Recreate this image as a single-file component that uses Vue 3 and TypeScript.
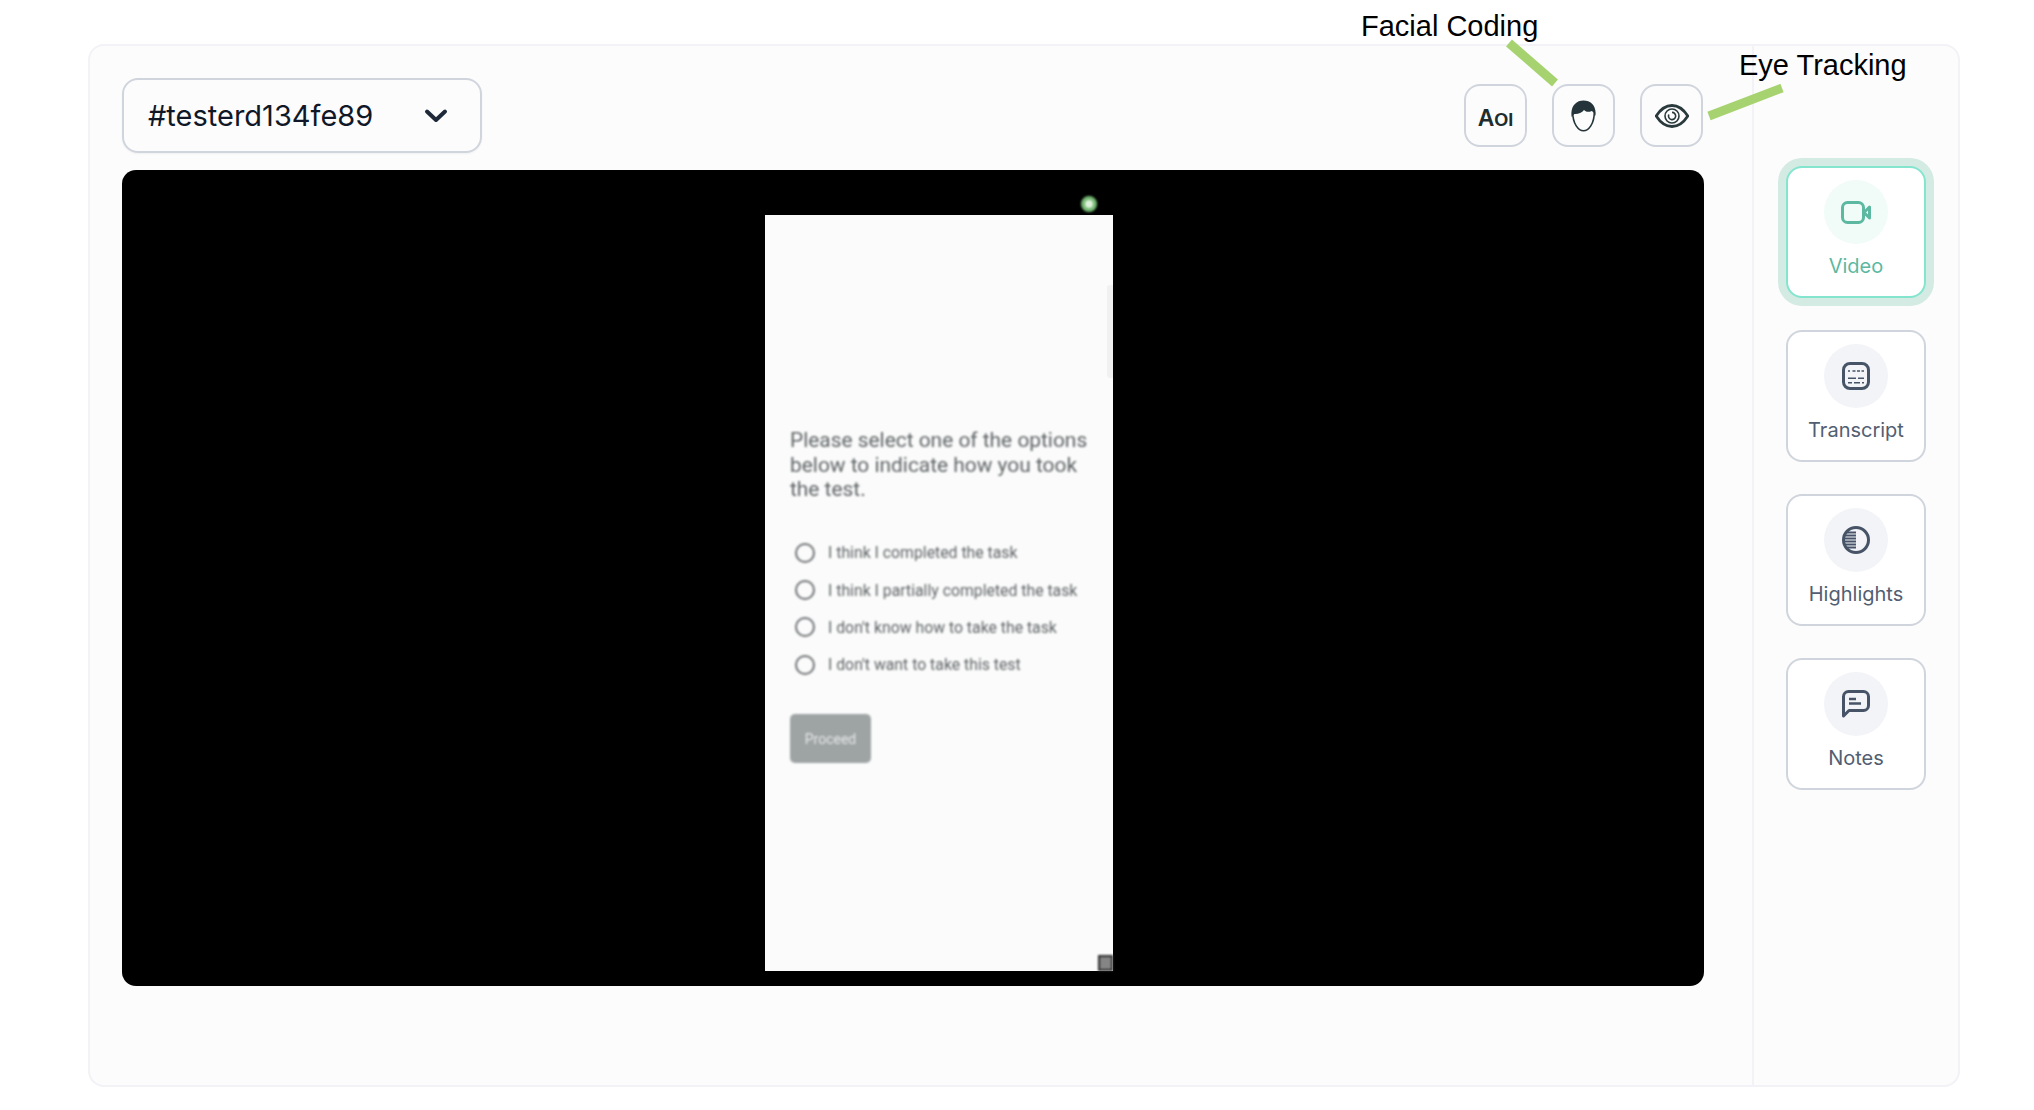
<script setup lang="ts">
const options: string[] = [
  'I think I completed the task',
  'I think I partially completed the task',
  "I don't know how to take the task",
  "I don't want to take this test",
]

const tabs = [
  { id: 'video', label: 'Video' },
  { id: 'transcript', label: 'Transcript' },
  { id: 'highlights', label: 'Highlights' },
  { id: 'notes', label: 'Notes' },
]
const activeTab = 'video'

// stripes on the left half of the highlights icon, cut to the circle
const stripes = Array.from({ length: 6 }, (_, i) => {
  const y = 6.5 + i * 3
  const half = Math.sqrt(Math.max(0, 12 * 12 - (y - 14) * (y - 14)))
  return { y, x1: 14 - half, x2: 14 }
})
</script>

<template>
  <div class="page">
    <div class="panel">
      <div class="main">
        <div class="toolbar">
          <div class="select">
            <span>#testerd134fe89</span>
            <svg width="24" height="16" viewBox="0 0 24 16" fill="none">
              <path d="M3 3.500L12 12L21 3.500" stroke="#1d2939" stroke-width="4" stroke-linecap="round" stroke-linejoin="round" />
            </svg>
          </div>
          <div class="tools">
            <button class="tool aoi">A<small>OI</small></button>
            <button class="tool">
              <svg width="25" height="32" viewBox="0 0 25 32" fill="none">
                <path d="M1.700 12C1.700 24 7.500 30.800 12.500 30.800C17.500 30.800 23.300 24 23.300 12" stroke="#24343a" stroke-width="1.600" />
                <path d="M.6 17C-.8 6 5 .4 12.500 .4C20 .4 25.800 6 24.400 16C23.800 13.500 22.500 12 20.500 11C18 12.500 15 12 13 10C11 13 6 14.500 3.500 14C2.500 14.800 1.300 15.800 .6 17Z" fill="#24343a" />
              </svg>
            </button>
            <button class="tool">
              <svg width="34" height="24" viewBox="0 0 34 24" fill="none" stroke="#2a3a3c">
                <path d="M1.200 12C6 4.500 11 1.500 17 1.500C23 1.500 28 4.500 32.800 12C28 19.500 23 22.500 17 22.500C11 22.500 6 19.500 1.200 12Z" stroke-width="2.800" stroke-linejoin="round" />
                <circle cx="17" cy="12" r="7" stroke-width="1.600" />
                <path d="M13.800 10.500A3.600 3.600 0 1 0 17 8.400" stroke-width="1.600" />
              </svg>
            </button>
          </div>
        </div>

        <div class="video">
          <div class="phone">
            <span class="scrollbar"></span>
            <span class="corner"></span>
            <span class="dot"></span>
            <div class="screen">
              <p class="question">Please select one of the options below to indicate how you took the test.</p>
              <div class="options">
                <label v-for="opt in options" :key="opt" class="option">
                  <i class="radio"></i>
                  <span>{{ opt }}</span>
                </label>
              </div>
              <div class="proceed">Proceed</div>
            </div>
          </div>
        </div>
      </div>

      <aside class="side">
        <div v-for="tab in tabs" :key="tab.id" class="card" :class="{ active: tab.id === activeTab }">
          <div class="bubble">
            <svg v-if="tab.id === 'video'" width="30" height="23" viewBox="0 0 30 23" fill="none" stroke="#5cb8a0" stroke-width="3" stroke-linejoin="round">
              <rect x="1.500" y="1.500" width="21" height="20" rx="5" />
              <path d="M23 11.500L28.500 6V17Z" />
            </svg>
            <svg v-else-if="tab.id === 'transcript'" width="28" height="28" viewBox="0 0 28 28" fill="none" stroke="#475467">
              <rect x="1.500" y="1.500" width="25" height="25" rx="6.500" stroke-width="3" />
              <path d="M6 9H8M10.500 9H22" stroke-width="1.600" stroke-dasharray="3 1.500" />
              <path d="M6 16.300H14M16 16.300H22" stroke-width="1.600" />
              <path d="M6 20.700H10M12 20.700H18M20 20.700H22" stroke-width="1.600" />
            </svg>
            <svg v-else-if="tab.id === 'highlights'" width="28" height="28" viewBox="0 0 28 28" fill="none" stroke="#475467">
              <circle cx="14" cy="14" r="12.500" stroke-width="3" />
              <line v-for="s in stripes" :key="s.y" :x1="s.x1" :x2="s.x2" :y1="s.y" :y2="s.y" stroke-width="2" />
            </svg>
            <svg v-else width="28" height="28" viewBox="0 0 28 28" fill="none" stroke="#475467" stroke-width="3" stroke-linejoin="round">
              <path d="M1.500 26V6.500A5 5 0 0 1 6.500 1.500H21.500A5 5 0 0 1 26.500 6.500V15.500A5 5 0 0 1 21.500 20.500H7Z" />
              <path d="M7 9H14M7 13.500H19" stroke-width="2.400" />
            </svg>
          </div>
          <div class="label">{{ tab.label }}</div>
        </div>
      </aside>
    </div>

    <!-- callouts pasted over the screenshot -->
    <span class="note facial">Facial Coding</span>
    <span class="note eye">Eye Tracking</span>
    <svg class="callouts" width="2034" height="200" viewBox="0 0 2034 200">
      <line x1="1509" y1="43" x2="1555" y2="83" />
      <line x1="1709" y1="116" x2="1782" y2="88" />
    </svg>
  </div>
</template>

<style scoped>
.page {
  position: relative;
  width: 2034px;
  height: 1110px;
  padding: 44px 74px 23px 88px;
  box-sizing: border-box;
  font-family: Inter, sans-serif;
  overflow: hidden;
}

.panel {
  display: flex;
  height: 100%;
  box-sizing: border-box;
  background: #fcfcfd;
  border: 2px solid #f2f2f7;
  border-radius: 16px;
}

.main {
  flex: 1;
  padding: 32px 48px 0 32px;
}

.toolbar {
  display: flex;
  justify-content: space-between;
  align-items: center;
  margin-bottom: 17px;
}

.select {
  display: flex;
  align-items: center;
  justify-content: space-between;
  width: 360px;
  height: 75px;
  box-sizing: border-box;
  padding: 0 32px 0 24px;
  border: 2px solid #d0d5dd;
  border-radius: 16px;
  box-shadow: 0 1px 2px rgba(16, 24, 40, 0.05);
  font-size: 29px;
  color: #101828;
}

.tools {
  display: flex;
  gap: 25px;
  margin-right: 1px;
}

.tool {
  display: flex;
  align-items: center;
  justify-content: center;
  width: 63px;
  height: 63px;
  padding: 0;
  background: transparent;
  border: 2px solid #d0d5dd;
  border-radius: 16px;
}

.aoi {
  align-items: baseline;
  padding-top: 32px;
  font-family: "Liberation Sans", sans-serif;
  font-size: 23px;
  line-height: 0;
  font-weight: 700;
  color: #1f2d2f;
}

.aoi small {
  font-size: 18px;
}

.video {
  height: 816px;
  box-sizing: border-box;
  padding: 45px 0 0 643px;
  background: #000;
  border-radius: 14px;
}

.phone {
  position: relative;
  width: 348px;
  height: 756px;
  background: #fbfbfb;
}

.scrollbar {
  position: absolute;
  top: 70px;
  right: 0;
  width: 6px;
  height: 93px;
  background: #f1f1f1;
  border-radius: 3px 0 0 3px;
}

.corner {
  position: absolute;
  right: 0;
  bottom: 0;
  width: 15px;
  height: 16px;
  box-sizing: border-box;
  background: #858585;
  border: 2px solid #2e2e2e;
  filter: blur(0.8px);
}

.dot {
  position: absolute;
  top: -19px;
  left: 316px;
  width: 16px;
  height: 16px;
  background: #dff0da;
  border: 4px solid #74b872;
  box-sizing: border-box;
  border-radius: 50%;
  filter: blur(1px);
}

.screen {
  padding: 213px 0 0 25px;
  font-family: Roboto, sans-serif;
  color: #5f6466;
  filter: blur(0.8px);
}

.question {
  width: 310px;
  margin: 0 0 40px;
  font-size: 20.900px;
  line-height: 24.600px;
}

.options {
  display: flex;
  flex-direction: column;
  gap: 15.300px;
  padding-left: 5px;
}

.option {
  display: flex;
  align-items: center;
  gap: 13px;
  height: 22px;
  font-size: 15.800px;
}

.radio {
  width: 20px;
  height: 20px;
  box-sizing: border-box;
  border: 2px solid #6f7375;
  border-radius: 50%;
}

.proceed {
  display: flex;
  align-items: center;
  justify-content: center;
  width: 81px;
  height: 49px;
  margin-top: 38.500px;
  background: #9ea3a4;
  border-radius: 5px;
  font-size: 14px;
  color: #e6e8e8;
}

.side {
  display: flex;
  flex-direction: column;
  align-items: center;
  gap: 32px;
  width: 204px;
  box-sizing: content-box;
  padding-top: 120px;
  border-left: 2px solid #f2f2f7;
}

.card {
  display: flex;
  flex-direction: column;
  align-items: center;
  width: 140px;
  height: 132px;
  box-sizing: border-box;
  padding-top: 12px;
  background: #fff;
  border: 2px solid #d0d5dd;
  border-radius: 16px;
  color: #525e72;
}

.card.active {
  border-color: #84e5cf;
  box-shadow: 0 0 0 8px #d3ebe3;
  color: #5cb8a0;
}

.bubble {
  display: flex;
  align-items: center;
  justify-content: center;
  width: 64px;
  height: 64px;
  background: #f2f4f7;
  border-radius: 50%;
}

.active .bubble {
  background: #f1fcf9;
}

.label {
  margin-top: 10px;
  font-size: 20px;
  line-height: 24px;
}

.note {
  position: absolute;
  font-family: "Liberation Sans", sans-serif;
  font-size: 29px;
  line-height: 34px;
  color: #000;
}

.facial {
  top: 9px;
  left: 1361px;
}

.eye {
  top: 48px;
  left: 1739px;
}

.callouts {
  position: absolute;
  top: 0;
  left: 0;
  pointer-events: none;
}

.callouts line {
  stroke: #a6d36f;
  stroke-width: 9;
}
</style>

<style>
body {
  margin: 0;
  background: #fff;
}
</style>
